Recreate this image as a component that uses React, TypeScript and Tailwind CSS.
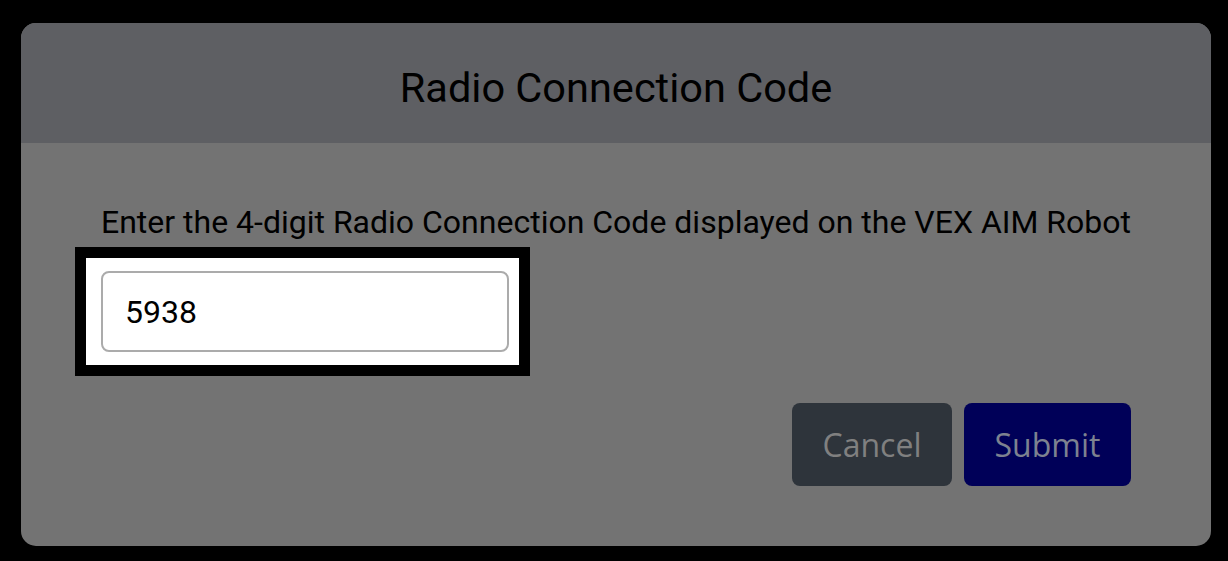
export default function App() {
  return (
    <div className="w-[1228px] h-[561px] bg-black pt-[23px] pl-[21px]" style={{ fontFamily: "Roboto, 'Noto Sans', sans-serif" }}>
      <div className="w-[1190px] h-[523px] rounded-[15px] overflow-hidden bg-[#737373] flex flex-col">
        <div className="h-[120px] shrink-0 bg-[#5e5f63] flex items-center justify-center pt-[10px]">
          <h1 className="text-[41.5px] leading-[48px] text-black font-normal">Radio Connection Code</h1>
        </div>
        <div className="flex flex-col px-[54px]">
          <p className="mt-[60px] text-center text-[32px] leading-[38px] text-black">
            Enter the 4-digit Radio Connection Code displayed on the VEX AIM Robot
          </p>
          <div className="mt-[6px] w-[455px] h-[129px] border-[11px] border-black bg-white pt-[13px] pl-[15px]">
            <div className="w-[408px] h-[81px] rounded-[8px] border-2 border-[#ababab] bg-white flex items-center pl-[22px] text-[32px] text-black">
              5938
            </div>
          </div>
          <div className="flex justify-end gap-[12px] mr-[26px] mt-[27px]" style={{ fontFamily: "'Open Sans', sans-serif" }}>
            <button className="w-[160px] h-[83px] rounded-[8px] bg-[#2e343b] text-[#808080] text-[32px]">Cancel</button>
            <button className="w-[167px] h-[83px] rounded-[8px] bg-[#000058] text-[#7d8290] text-[32px]">Submit</button>
          </div>
        </div>
      </div>
    </div>
  );
}
